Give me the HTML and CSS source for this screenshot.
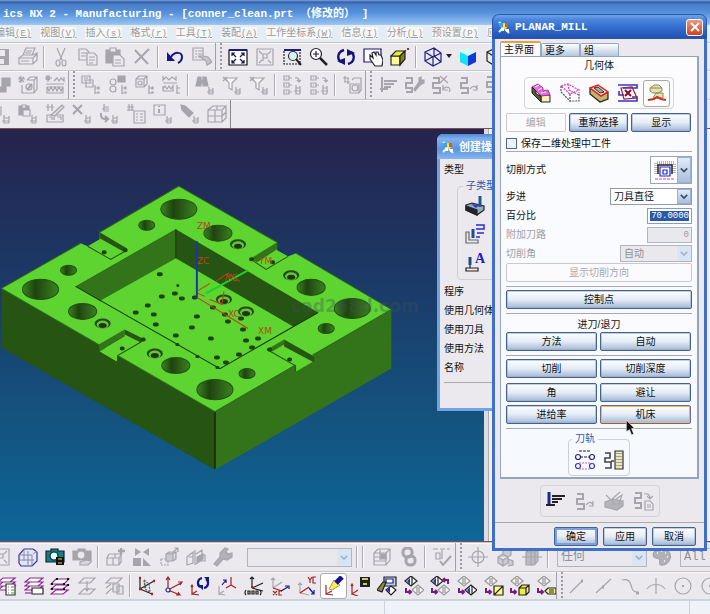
FILE: index.html
```html
<!DOCTYPE html>
<html lang="zh-CN">
<head>
<meta charset="utf-8">
<title>NX 2 - Manufacturing</title>
<link rel="stylesheet" href="styles.css">
</head>
<body>
<svg class="sprite" aria-hidden="true">
  <defs>
    <symbol id="save" viewBox="0 0 20 20"><path fill="currentColor" stroke="none" fill-rule="evenodd" d="M1 2h17v16H3l-2-2zM5 3v6h9V3zM6 12v5h7v-5z"/></symbol>
    <symbol id="print" viewBox="0 0 20 20"><path d="M5 8l3-7h9l-3 7M8 4h6M7 6h6M1 11l4-3h10l4-2v7l-4 4H1zM1 11h14v6M15 11l4-4M3 14h8"/></symbol>
    <symbol id="cut" viewBox="0 0 20 20"><path d="M6 1l5 12M14 1L9 13"/><ellipse cx="7" cy="16" rx="2" ry="3"/><ellipse cx="13" cy="16" rx="2" ry="3"/></symbol>
    <symbol id="copy" viewBox="0 0 20 20"><path d="M1 2h7l3 3v8H1zM3 6h6M3 9h5"/><path fill="#ebe9ee" d="M9 6h7l3 3v9H9zM11 10h6M11 13h6M11 16h4"/></symbol>
    <symbol id="paste" viewBox="0 0 20 20"><path fill="currentColor" d="M1 3h14v13H1z"/><path fill="#ebe9ee" d="M5 1h6v4H5zM8 8h7l4 4v7H8zM10 13h6M10 16h6"/></symbol>
    <symbol id="del" viewBox="0 0 20 20"><path stroke-width="2" d="M3 3l13 14M17 2L3 16"/></symbol>
    <symbol id="undo" viewBox="0 0 20 20"><path stroke="#14148c" stroke-width="2" d="M6 10c4-6 11-5 11 0 0 3-2 5-4 6"/><path fill="#14148c" stroke="none" d="M2 5v9h8z"/></symbol>
    <symbol id="pen" viewBox="0 0 20 20"><path d="M1 1h10v12H1zM3 4h2M6 4h4M3 7h2M6 7h4M3 10h2M6 10h3"/><path fill="#c5c4ca" d="M7 9l7 5 1 4 5-3-4-5-5-1z"/></symbol>
    <symbol id="fit" viewBox="0 0 20 20"><path fill="#fff" stroke="#111" d="M1 3h18v15H1z"/><path stroke="#1a1a80" stroke-width="2" d="M1 3h18"/><path stroke="#141450" d="M4 9V6h3M13 6h3v3M16 13v3h-3M7 16H4v-3M4 6l4 4M16 6l-4 4M4 16l4-4M16 16l-4-4"/></symbol>
    <symbol id="fit2" viewBox="0 0 20 20"><path d="M2 2h16v16H2zM4 4l3 3M16 4l-3 3M4 16l3-3M16 16l-3-3M8 14V7h4v4H8"/></symbol>
    <symbol id="zoombox" viewBox="0 0 20 20"><path stroke="#222" stroke-dasharray="2 1" d="M2 3h16v14H2z"/><path stroke="#1a1a90" stroke-width="2" d="M2 3h17"/><circle cx="11" cy="9" r="4.500" fill="#d8f2ee" stroke="#333"/><path stroke="#222" stroke-width="2" d="M14 12l5 6"/></symbol>
    <symbol id="zoom" viewBox="0 0 20 20"><circle cx="7" cy="7" r="5.500" fill="#fff" stroke="#222"/><path stroke="#14147c" d="M4 7h6M7 4v6"/><path stroke="#222" stroke-width="2.500" d="M11 11l7 7"/></symbol>
    <symbol id="rotate" viewBox="0 0 20 20"><path stroke="#14147c" stroke-width="2.400" d="M8 3C1 5 1 12 5 15M12 17c7-2 7-9 3-12"/><path fill="#14147c" stroke="none" d="M1 14l8-3v7zM19 6l-8 3V2z"/></symbol>
    <symbol id="pan" viewBox="0 0 20 20"><path fill="#fff" stroke="#14147c" d="M1 2h17v13H1z"/><path fill="#fff" stroke="#222" d="M7 8l3 3-1-5 2-1 2 3 0-3 2 0 1 3 2 0 2 5-1 6h-7l-5-7z"/></symbol>
    <symbol id="ybox" viewBox="0 0 20 20"><path fill="#fbfb9c" stroke="#222" d="M1 9h9v9H1z"/><path fill="#eaea30" stroke="#222" d="M1 9l5-5h9l-5 5z"/><path fill="#83831e" stroke="#222" d="M10 18V9l5-5v8z"/><path stroke="#b02030" stroke-width="2" d="M18 1v2"/></symbol>
    <symbol id="wire" viewBox="0 0 20 20"><path stroke="#202080" stroke-width="1.200" d="M2 5l9-4 7 5v9l-8 4-8-5zM2 5l8 5 8-4M10 10v9M11 1v8M2 14l9-5 7 6"/></symbol>
    <symbol id="shade" viewBox="0 0 20 20"><path fill="#cffcff" stroke="none" d="M2 5l8-4 8 4-8 4z"/><path fill="#10e4f2" stroke="none" d="M2 5l8 4v10l-8-4z"/><path fill="#1238d8" stroke="none" d="M10 9l8-4v10l-8 4z"/></symbol>
    <symbol id="wireb" viewBox="0 0 20 20"><path stroke="#222" stroke-width="1.200" d="M2 5l9-4 7 5v9l-8 4-8-5zM2 5l8 5 8-4M10 10v9"/></symbol>
    <symbol id="newblk" viewBox="0 0 20 20"><path d="M2 3l5 5M7 3L2 8M4 1v8M1 5h7"/><path fill="currentColor" d="M11 3h8v8h-4v6H7v-5h4z"/></symbol>
    <symbol id="newgeo" viewBox="0 0 20 20"><path d="M1 2l5 5M6 2L1 7M3 1v7M0 4h7M9 5l3-3h7v12l-3 4H4v-8M9 5h7v13M16 5l3-3"/><circle cx="11" cy="12" r="3"/><path stroke-width="2" d="M9 15l5-6"/></symbol>
    <symbol id="newmth" viewBox="0 0 20 20"><path d="M1 1l4 4M5 1L1 5M3 0v7M0 3h7M9 6l3-3 2 3 2-3 3 3V2M1 9h18M2 12h16v6H2v-6l2 4 2-4 2 4 2-4 2 4 2-4 2 4 2-4"/></symbol>
    <symbol id="tree" viewBox="0 0 20 20"><path d="M1 1h8v7H1zM3 3h4M3 5h4M5 5h7v7H5zM7 8h4"/><path fill="currentColor" d="M14 10v9M14 13h3M14 18h3M17 12h1v2h-1zM17 17h1v1h-1z"/></symbol>
    <symbol id="tree2" viewBox="0 0 20 20"><path fill="currentColor" d="M10 1h7v6h-7zM14 10v9M14 13h3M14 18h3M17 12h1v2h-1zM17 17h1v1h-1z"/><circle cx="5" cy="7" r="3"/><circle cx="5" cy="14" r="3"/></symbol>
    <symbol id="tree3" viewBox="0 0 20 20"><path d="M1 4l3-3h8v8l-3 3H1zM1 4h8v8M9 4l3-3"/><circle cx="5" cy="8" r="2"/><path fill="currentColor" d="M14 10v9M14 13h3M14 18h3M17 12h1v2h-1zM17 17h1v1h-1z"/></symbol>
    <symbol id="tree4" viewBox="0 0 20 20"><path d="M1 1v4l3-3 3 3 3-3 4 3V1M1 8h14M1 11v5h10v-5l-2 3-2-3-2 3-2-3-2 3"/><path fill="currentColor" d="M15 10v9M15 13h3M15 18h3"/></symbol>
    <symbol id="binoc" viewBox="0 0 20 20"><path fill="currentColor" d="M1 11L3 2h3v9zM8 11V2h3l2 9zM5 5h4v3H5z"/><path d="M14 12v7h4M14 15h4M12 17h6M18 13v6"/></symbol>
    <symbol id="filt" viewBox="0 0 20 20"><path fill="#f6f6f8" d="M3 3h12l-5 5v7l-3-2V8z"/><path d="M1 2l4 4M5 2L1 6M14 12v7h4M14 15h4M12 17h6M18 13v6"/></symbol>
    <symbol id="list" viewBox="0 0 20 20"><path d="M2 1h5v4H2zM2 8h5v4H2zM2 15h5v4H2zM4 3h1M4 10h1M4 17h1M7 10h3M7 3h3M7 17h3M13 3c3-1 4 1 4 3M15 5l2 2 2-2M14 10v9h4M14 13h4M12 16h7M18 11v8"/></symbol>
    <symbol id="gen" viewBox="0 0 20 20"><path d="M1 3h6M3 1v6M6 3v6M2 7h6M10 5l2-2h7v12l-2 3H8V9h9v9"/><circle cx="13" cy="13" r="3"/></symbol>
    <symbol id="mill" viewBox="0 0 20 20"><path stroke-width="2" d="M4 2v15M6 6h13M6 9h10M6 12h7M2 14h8"/></symbol>
    <symbol id="snake" viewBox="0 0 20 20"><path stroke-width="2" d="M2 3h6v5H2v5h7v5H2"/><path d="M11 14c3-4 6-3 7 0M18 10v5h-4"/></symbol>
    <symbol id="snakex" viewBox="0 0 20 20"><path stroke-width="2" d="M1 3h6v5H1v5h7v5H1"/><path d="M8 1l8 7M15 1L8 8M17 17c3-4-2-7-6-3M11 10v5h5"/></symbol>
    <symbol id="snakew" viewBox="0 0 20 20"><path stroke-width="2" d="M1 3h6v5H1v5h6v4H1"/><path fill="currentColor" d="M9 14l5-7 0-4 2-1 0 3 3 0 0 3-4 2-5 6z"/></symbol>
    <symbol id="snakep" viewBox="0 0 20 20"><path stroke-width="2" d="M1 2h6v5H1v5h6v5H1"/><path d="M10 3c4-1 6 1 6 4M13 5l3 3 3-3M11 10h5l3 3v6h-8zM13 14h4M13 16h4"/></symbol>
    <symbol id="op" viewBox="0 0 20 20"><path d="M1 3h9v8H1zM3 3V1h5v2M3 5h5M3 8h5M13 11v8h5M13 14h5M11 17h7M18 12v7"/></symbol>
    <symbol id="oppaste" viewBox="0 0 20 20"><path fill="currentColor" d="M1 2h10v9H1z"/><path fill="#ebe9ee" d="M4 1h4v3H4zM5 6h7v6H5z"/><path d="M14 11v8h4M14 14h4M12 17h6M18 12v7"/></symbol>
    <symbol id="opedit" viewBox="0 0 20 20"><path d="M1 3h8M3 0v7M7 0v7M2 11h16v7H2zM4 13h3v3M9 13v3M12 13h4v3"/><path fill="#d8d7dc" d="M6 11L17 1l2 2-9 9z"/></symbol>
    <symbol id="opdel" viewBox="0 0 20 20"><path stroke-width="2" d="M1 1l9 9M10 1L1 10"/><path d="M14 11v8h4M14 14h4M12 17h6M18 12v7"/></symbol>
    <symbol id="opcyc" viewBox="0 0 20 20"><path d="M5 0v7h5M5 3h5M3 5h7"/><path stroke-width="2" d="M2 9c0 7 2 6 7 6M6 12l3 3-3 3"/><path d="M14 11v8h4M14 14h4M12 17h6M18 12v7"/></symbol>
    <symbol id="opprop" viewBox="0 0 20 20"><path d="M1 3h7M3 0v7M6 0v7M1 6h7M8 7h11v12H8zM10 10h2M14 10h3M10 13h2M14 13h3M10 16h2M14 16h3"/></symbol>
    <symbol id="opinfo" viewBox="0 0 20 20"><path d="M1 1h11v10H1z"/><path stroke-width="2" d="M6 5v4M6 2v1"/><path d="M14 12v7h4M14 15h4M12 17h6M18 13v6"/></symbol>
    <symbol id="opflash" viewBox="0 0 20 20"><path fill="currentColor" d="M1 1l4 1 8 7-4 4L2 6z"/><path d="M14 12v7h4M14 15h4M12 17h6M18 13v6"/></symbol>
    <symbol id="cage" viewBox="0 0 20 20"><path d="M1 6l5-4h13v12l-4 4H1zM1 6h14v12M15 6l4-4M8 6v12M1 12h14M10 2v4M19 8l-4 4"/></symbol>
    <symbol id="part" viewBox="0 0 20 20"><path fill="#e4e6f4" stroke="#3434a0" d="M1 8l5-6h9l4 3v9l-5 5H3l-2-3z"/><path stroke="#88a" stroke-width="1" d="M6 2v12M1 8h13M14 8v10M2 13h14M10 4v14M15 7l4-3"/></symbol>
    <symbol id="cam" viewBox="0 0 20 20"><path fill="#138080" stroke="#123" d="M1 4h5V2h7v2h6v11H1z"/><circle cx="9" cy="9" r="4" fill="#dff" stroke="#123"/><path fill="#111" stroke="none" d="M11 10h8v8h-8z"/><path stroke="#dd4" d="M13 12h4M13 16h4"/></symbol>
    <symbol id="camg" viewBox="0 0 20 20"><path fill="currentColor" d="M1 4h5V2h7v2h6v9H1z"/><circle cx="9" cy="8" r="4" fill="#ebe9ee"/><path fill="#d6d5da" d="M8 15l6-2 6 1-4 4H8z"/></symbol>
    <symbol id="blkadd" viewBox="0 0 20 20"><path d="M2 11h6v7H2zM8 11h6v7H8zM4 7h6v4M2 11l2-4M14 11l2-3v7l-2 3M10 7h6"/><path stroke-width="2.500" d="M16 1v7M13 4h7"/></symbol>
    <symbol id="mirror" viewBox="0 0 20 20"><path fill="currentColor" stroke="none" d="M1 11h8v8H1zM11 19v-8l8 8zM3 1l6 4-6 4zM17 1l-6 4 6 4z"/></symbol>
    <symbol id="cubes" viewBox="0 0 20 20"><path d="M2 12h7v6H2z" stroke-dasharray="2 1"/><path fill="#c9c8ce" d="M7 7h7v7H7zM7 7l3-2h7l-3 2M14 14l3-2V5"/><path d="M14 5l5-4M19 1v4M19 1h-4"/></symbol>
    <symbol id="iso" viewBox="0 0 20 20"><path d="M1 10l6-5v11l-6 2zM9 3v15M10 7l6-4v10l-6 4M16 8h3v6h-5M3 10h4"/><path fill="currentColor" d="M11 10l6-3v5l-6 3z"/></symbol>
    <symbol id="wrench" viewBox="0 0 20 20"><path fill="#b2b1b8" d="M1 17l6-7 0-4 5-5 3 1-2 3 2 2 4-1 0 4-5 3-4-1-6 7z"/></symbol>
    <symbol id="hbox" viewBox="0 0 20 20"><path d="M2 6l4-4h12v11l-4 5H2zM2 6h12v12M14 6l4-4M2 10h12M2 14h12M8 2v11"/><path fill="currentColor" d="M9 7h5v5H9z"/></symbol>
    <symbol id="chain" viewBox="0 0 20 20"><rect x="4" y="1" width="9" height="9" rx="4" stroke-width="3"/><rect x="7" y="9" width="9" height="9" rx="4" stroke-width="3"/></symbol>
    <symbol id="check" viewBox="0 0 20 20"><path d="M1 2h5M8 2h5M15 2h3M4 6h4v6H4zM10 3v9"/><path stroke-width="2" d="M8 14l3 4 8-9"/></symbol>
    <symbol id="target" viewBox="0 0 20 20"><circle cx="10" cy="10" r="6"/><path d="M10 0v20M0 10h20"/></symbol>
    <symbol id="stack" viewBox="0 0 20 20"><path fill="#cccbd1" d="M3 10l5-3 5 3v6l-5 3-5-3zM3 10l5 3 5-3M8 13v6M8 7V3l4-2 4 2v5l-3 2M13 12l5 2v4l-5 1"/></symbol>
    <symbol id="sphere" viewBox="0 0 20 20"><path fill="#bdbcc2" d="M4 5l4-3h8v12l-4 4H4zM4 5h9v13M13 5l3-3M0 10h20M9 1v18"/></symbol>
    <symbol id="palette" viewBox="0 0 20 20"><path fill="#b2b1b8" d="M3 5c5-5 14-4 16 2s-4 12-9 11c-3-1 0-5-2-6S0 11 3 5z"/><path stroke="#eee" stroke-width="2" d="M6 6h1M10 4h1M14 6h1M16 10h1M13 14h1"/></symbol>
    <symbol id="lay1" viewBox="0 0 20 20"><path fill="#fff" stroke="#8a2a90" d="M1 14l5-4h12l-5 4zM1 10l5-4h12l-5 4zM1 6l5-4h12l-5 4z"/><path fill="#fff" stroke="#333" d="M9 8h9v11H9z"/><path stroke="#686" d="M11 11h1M14 11h3M11 14h1M14 14h3M11 17h1M14 17h3"/></symbol>
    <symbol id="lay2" viewBox="0 0 20 20"><path fill="#fff" stroke="#8a2a90" d="M1 14l5-4h13l-5 4zM1 10l5-4h13l-5 4zM1 6l5-4h13l-5 4z"/><path stroke="#8a2a90" d="M1 17h6"/><path fill="#fff" stroke="#222" d="M8 12h11v6H8z"/></symbol>
    <symbol id="lay3" viewBox="0 0 20 20"><path fill="#fff" stroke="#8a2a90" d="M1 18l5-4h12l-5 4zM1 13l5-4h12l-5 4zM1 8l5-5h13l-5 5z"/><path stroke="#111" stroke-width="2" d="M6 3h2M17 3h2M1 8h2M13 8h2M17 9h2M1 13h2M13 13h2"/></symbol>
    <symbol id="lay4" viewBox="0 0 20 20"><path d="M2 7l5-5h11l-5 5zM2 18l5-5h11l-5 5zM10 5v9M8 12l2 3 2-3"/></symbol>
    <symbol id="lay5" viewBox="0 0 20 20"><path d="M2 7l5-5h11l-5 5zM2 12l5-4M2 18l5-5h4"/><path fill="#e4e3e8" d="M9 8h6v8H9zM13 10h6v8h-6z"/></symbol>
    <symbol id="axa" viewBox="0 0 20 20"><path stroke="#222" d="M3 2v11M3 13l14-8M3 13l12 5"/><path stroke="#a22" stroke-width="2.500" d="M2 2h2M16 5h2M14 18h2M2 13h2"/><path stroke="#555" stroke-dasharray="2 1" d="M7 4l5 4 1 8-5-3zM7 4l2 9"/></symbol>
    <symbol id="axb" viewBox="0 0 20 20"><path stroke="#a02028" d="M4 14V2M2 4l2-3 2 3M4 14l13-7M14 6h4l-2 3M4 14l12 5M14 16l2 3-4 0"/><circle cx="4" cy="14" r="2" fill="#fff" stroke="#22a"/></symbol>
    <symbol id="axc" viewBox="0 0 20 20"><path stroke="#a02028" d="M2 9v9l5-3M2 18l7 1M1 11l1-2 1 2"/><path stroke="#14148c" stroke-width="2.200" d="M12 2c-5 1-5 7-2 9M14 12c5-1 5-7 2-9"/><path fill="#14148c" stroke="none" d="M7 9h6v5zM14 1h5v5z"/></symbol>
    <symbol id="axd" viewBox="0 0 20 20"><path d="M2 10v8l5-3M2 18l6 1"/><path stroke="#a02028" d="M14 9V1M14 9l5 3M14 9l-5 3"/><path stroke="#14148c" d="M5 9l4-5M6 4h3v3"/></symbol>
    <symbol id="axe" viewBox="0 0 20 20"><path stroke="#222" d="M8 12V1M6 3l2-2 2 2M8 12l11-5M8 12l11 3"/><path stroke="#a22" stroke-width="2" d="M7 11h2"/><path stroke="#222" d="M2 14q-2 3 0 5M4 15h2v3H4zM8 15h2v3H8zM12 15h2v3h-2zM16 14q2 3 0 5"/></symbol>
    <symbol id="axf" viewBox="0 0 20 20"><path d="M3 12V2M1 4l2-2 2 2M3 12l9-6"/><path stroke="#a22" d="M3 12l9 3M3 15l4 4M7 15l-4 4M12 15H9v4h3"/><path stroke="#14148c" d="M11 15l7-4M15 10h4v3"/></symbol>
    <symbol id="axg" viewBox="0 0 20 20"><path d="M3 7v10M1 9l2-2 2 2M3 17l9 2"/><path stroke="#a22" d="M3 17l9-6M11 1l2 3 2-3M13 4v3M19 1h-3v6h3"/><path stroke="#14148c" d="M12 12l5 6M17 14v4h-3"/></symbol>
    <symbol id="torch" viewBox="0 0 20 20"><path fill="#ffef50" stroke="#998" stroke-width="1" d="M5 13l5-9 6 5-8 5z"/><path stroke="#14148c" stroke-width="5" d="M12 7l6-6"/><path stroke="#a22" d="M2 9v9l6-3M2 18l7 1"/></symbol>
    <symbol id="axsave" viewBox="0 0 20 20"><path stroke="#a22" d="M2 8v10l6-4M2 18l6 2M1 10l1-2 1 2"/><path fill="#222" stroke="none" d="M10 1h10v10H10z"/><path stroke="#cc6" stroke-width="2" d="M12 3h6M13 8h4"/></symbol>
    <symbol id="dsp" viewBox="0 0 20 20"><path fill="#bcd" stroke="#222" d="M7 1h12v9H7z"/><path fill="#fff" stroke="#22a" d="M9 3h7v4H9z"/><path fill="#8a8a40" stroke="#222" d="M0 14l6-8 3 0-4 10z"/><path fill="#fff" stroke="#222" d="M9 14l5-4 5 4-5 5z"/><path fill="#22c" stroke="none" d="M13 11v6l-3-3z"/></symbol>
    <symbol id="da" viewBox="0 0 20 20"><path fill="#fff" stroke="#222" d="M1 5l6-5 6 5-6 5z"/><path fill="#23d" stroke="none" d="M6 2v7L3 5z"/><path stroke="#222" d="M8 1v8"/><path fill="#f4f4f6" stroke="#999" d="M8 14l6-5 6 5-6 5zM13 11v6M15 11v6"/><path stroke="#7a1a80" stroke-width="2" d="M2 12v4h4M5 14l2 2-2 2"/></symbol>
    <symbol id="da2" viewBox="0 0 20 20"><path fill="#fff" stroke="#222" d="M1 5l6-5 6 5-6 5z"/><path fill="#23d" stroke="none" d="M6 2v7L3 5z"/><path stroke="#222" d="M8 1v8"/><path fill="#f4f4f6" stroke="#999" d="M8 14l6-5 6 5-6 5zM13 11v6M15 11v6"/><path stroke="#7a1a80" stroke-width="2" d="M2 12v4h4M5 14l2 2-2 2M18 8V4h-4M15 2l-2 2 2 2"/></symbol>
    <symbol id="db" viewBox="0 0 20 20"><path fill="#f4f4f6" stroke="#999" d="M1 5l6-5 6 5-6 5zM6 2v6M8 2v6"/><path fill="#fff" stroke="#222" d="M8 14l6-5 6 5-6 5z"/><path fill="#23d" stroke="none" d="M13 11v7l-3-4z"/><path stroke="#222" d="M15 10v8"/><path stroke="#7a1a80" stroke-width="2" d="M2 12v4h4M5 14l2 2-2 2"/></symbol>
    <symbol id="dc" viewBox="0 0 20 20"><path fill="#f4f4f6" stroke="#999" d="M1 5l6-5 6 5-6 5zM6 2v6M8 2v6"/><path fill="#ffff78" stroke="#222" d="M10 10h9v9h-9zM10 19l9-9"/><path stroke="#7a1a80" stroke-width="2" d="M2 12v4h4M5 14l2 2-2 2"/></symbol>
    <symbol id="dd" viewBox="0 0 20 20"><path fill="#f4f4f6" stroke="#999" d="M1 5l6-5 6 5-6 5zM6 2v6M8 2v6"/><path fill="#f2ee40" stroke="#222" d="M9 12h7v7H9zM9 12l3-3h7l-3 3M16 19l3-3V9"/><path stroke="#7a1a80" stroke-width="2" d="M1 12v4h4M4 14l2 2-2 2"/></symbol>
    <symbol id="de" viewBox="0 0 20 20"><path fill="#f4f4f6" stroke="#999" d="M1 5l6-5 6 5-6 5zM6 2v6M8 2v6"/><path fill="#f8f48a" stroke="#222" d="M8 15l3-3h8v6h-8zM12 14h5M12 16h5"/><path stroke="#7a1a80" stroke-width="2" d="M1 12v4h4M4 14l2 2-2 2"/></symbol>
    <symbol id="ln1" viewBox="0 0 20 20"><path d="M4 17L16 5"/><path stroke-width="3" d="M15 5h2"/></symbol>
    <symbol id="ln2" viewBox="0 0 20 20"><path d="M3 17L18 3"/><path stroke-width="3" d="M9 11h2"/></symbol>
    <symbol id="cv" viewBox="0 0 20 20"><path d="M2 4c5-1 8 1 9 5s2 7 6 7"/><path stroke-width="3" d="M16 17h3"/></symbol>
    <symbol id="crs" viewBox="0 0 20 20"><path d="M10 2v16M1 13c4-6 14-6 18 0"/></symbol>
    <symbol id="circ" viewBox="0 0 20 20"><circle cx="10" cy="10" r="8"/><path stroke-width="2" d="M9 10h2"/></symbol>
    <symbol id="chev" viewBox="0 0 10 10"><path stroke-width="2" d="M1 3l4 4 4-4"/></symbol>
    <symbol id="logo" viewBox="0 0 14 14"><path stroke="#e8f4ff" stroke-width="2" d="M2 2l3 3M2 12l4-4M8 9l4 4"/><circle cx="7" cy="6" r="3" fill="#f6e64a" stroke="none"/><path fill="#e35326" stroke="none" d="M8 3h3v4H8z"/><path fill="#38a4e8" stroke="none" d="M2 3h4v4H2z"/><path fill="#fff" stroke="none" d="M4 8h3v3H4zM9 9h3v3H9z"/></symbol>
    <symbol id="g1" viewBox="0 0 20 20"><path fill="#f6f0b4" stroke="#222" stroke-width="1" d="M10 12h9v7h-9z"/><path fill="#e86ae0" stroke="#a030a0" stroke-width="1" d="M1 4l6-3 5 4v3l5-1 2 5-9 1z"/><path stroke="#fff" stroke-width="1" d="M4 4l4-2M7 7l4-2M10 10l5-1"/><path fill="#5a5a2a" stroke="#222" stroke-width="1" d="M1 4l4 4v3l5 2v6l-9-9z"/></symbol>
    <symbol id="g2" viewBox="0 0 20 20"><path stroke="#d63ed0" stroke-dasharray="2 1" d="M1 3l7-2 11 6-9 4zM8 1l1 6 10 5"/><path stroke="#555" stroke-dasharray="2 1" d="M1 3v6l9 9h9v-9M10 11v8"/></symbol>
    <symbol id="g3" viewBox="0 0 20 20"><path fill="#c8b070" stroke="#222" d="M1 6v5l10 8 8-3v-6z"/><path fill="#f4e2d8" stroke="#dd2418" stroke-width="1.500" d="M1 5l8-3 10 7-7 4z"/><path fill="#aaa" stroke="#333" stroke-width="1" d="M5 5l4-1 6 5-4 1z"/></symbol>
    <symbol id="g4" viewBox="0 0 20 20"><path stroke="#3434c8" stroke-width="1.600" d="M0 2h19v3H5M1 8v4h5M0 18h19v-4h-5"/><path stroke="#9c2048" d="M3 5l11-1 5 11-13 1z"/><path stroke="#801028" stroke-width="2" d="M7 7l6 6M13 7l-6 6"/></symbol>
    <symbol id="g5" viewBox="0 0 20 20"><path fill="#e4e0b0" stroke="#8a8a60" stroke-width="1" d="M3 5l4-3h5l3 3v3l-4 2H6L3 8zM3 5h8l4 0M9 10h7v5H6z"/><path stroke="#d03020" stroke-width="2" d="M1 17l6-1 3-2 4 2 5 1"/></symbol>
    <symbol id="ptn" viewBox="0 0 22 20"><path stroke="#b4b4a8" stroke-width="4" stroke-dasharray="1 1" d="M2 14V3h18v11"/><path stroke="#222" stroke-width="1.500" d="M4 14V5h14v9"/><path fill="#fff" stroke="#2222dc" stroke-width="1.200" d="M6 7h10v9H6zM9 10h4v4H9z"/><path stroke="#d040c0" stroke-dasharray="3 1" d="M1 19h20"/></symbol>
    <symbol id="p1" viewBox="0 0 20 20"><path stroke="#222" stroke-dasharray="3 1" d="M4 1h12M5 7h10"/><circle cx="3" cy="7" r="2.500" stroke="#228"/><circle cx="17" cy="7" r="2.500" stroke="#228"/><circle cx="3" cy="16" r="2.500" stroke="#33a"/><circle cx="17" cy="16" r="2.500" stroke="#33a"/><path stroke="#d060d0" stroke-dasharray="2 1" d="M4 13h12M4 19h12"/></symbol>
    <symbol id="p2" viewBox="0 0 20 20"><path stroke="#444" stroke-width="1.600" d="M1 3h5v5H1v4h6v6H1M7 11h3"/><path fill="#e6e6c0" stroke="#333" d="M11 1h8v18h-8z"/><path stroke="#776" stroke-dasharray="1 2" d="M13 3v14M17 3v14M15 3v14"/></symbol>
    <symbol id="q1" viewBox="0 0 20 20"><path stroke="#1a2a90" stroke-width="3" d="M4 1v12"/><path stroke="#222" stroke-width="2" d="M7 5h13M7 8h10M7 11h6M1 14h9"/></symbol>
    <symbol id="q3" viewBox="0 0 20 20"><path fill="#b5b4ba" d="M1 11l8-3 10 2v5l-6 4-12-3z"/><path d="M2 4l5 5 9-8M9 8v5h6l3-9-6 4"/></symbol>
    <symbol id="s1" viewBox="0 0 20 20"><path fill="#9ab" stroke="#222" d="M1 9l6-2 12 3v4l-7 5L1 14z"/><path fill="#223" stroke="#222" d="M1 10l11 4v5L1 14z"/><path fill="#2a3ad0" stroke="none" d="M6 8l8 1-3 3z"/><path stroke="#1c5a8c" stroke-width="3" d="M15 0v11"/></symbol>
    <symbol id="s2" viewBox="0 0 20 20"><path stroke="#666" d="M1 8v11h12v-3H4V8z"/><path stroke="#234a90" stroke-width="3" d="M8 5v9"/><path stroke="#2a2ad8" stroke-width="1.500" d="M11 1h8v4h-8M12 9h7M11 13h4"/></symbol>
    <symbol id="s3" viewBox="0 0 20 20"><path stroke="#224a7c" stroke-width="3" d="M5 5v8"/><path stroke="#222" d="M5 13v3M1 16h12v3H1z"/></symbol>
  </defs>
</svg>

<div class="app">
  <header class="titlebar">ics NX 2 - Manufacturing - [conner_clean.prt （修改的） ]</header>
  <nav class="menubar">
    <a href="#">编辑<i>(E)</i></a><a href="#">视图<i>(V)</i></a><a href="#">插入<i>(s)</i></a><a href="#">格式<i>(r)</i></a><a href="#">工具<i>(T)</i></a><a href="#">装配<i>(A)</i></a><a href="#">工作坐标系<i>(W)</i></a><a href="#">信息<i>(I)</i></a><a href="#">分析<i>(L)</i></a><a href="#">预设置<i>(P)</i></a><a href="#">应用</a>
  </nav>

  <div class="toolbar lead">
    <button aria-label="save"><svg><use href="#save"/></svg></button>
    <button aria-label="print"><svg><use href="#print"/></svg></button>
    <hr>
    <button aria-label="cut"><svg><use href="#cut"/></svg></button>
    <button aria-label="copy"><svg><use href="#copy"/></svg></button>
    <button aria-label="paste"><svg><use href="#paste"/></svg></button>
    <button aria-label="delete"><svg><use href="#del"/></svg></button>
    <hr>
    <button aria-label="undo"><svg><use href="#undo"/></svg></button>
    <button aria-label="properties"><svg><use href="#pen"/></svg></button>
    <span class="grip"></span>
    <button aria-label="fit"><svg><use href="#fit"/></svg></button>
    <button aria-label="fit selection"><svg><use href="#fit2"/></svg></button>
    <button aria-label="zoom box"><svg><use href="#zoombox"/></svg></button>
    <button aria-label="zoom"><svg><use href="#zoom"/></svg></button>
    <button aria-label="rotate"><svg><use href="#rotate"/></svg></button>
    <button aria-label="pan"><svg><use href="#pan"/></svg></button>
    <button aria-label="perspective"><svg><use href="#ybox"/></svg></button>
    <hr>
    <button aria-label="wireframe"><svg><use href="#wire"/></svg></button>
    <span class="drop"></span>
    <button aria-label="shaded"><svg><use href="#shade"/></svg></button>
    <button aria-label="hidden edges"><svg><use href="#wireb"/></svg></button>
  </div>
  <div class="toolbar lead">
    <button aria-label="tool"><svg><use href="#newblk"/></svg></button>
    <button aria-label="geometry"><svg><use href="#newgeo"/></svg></button>
    <button aria-label="method"><svg><use href="#newmth"/></svg></button>
    <span class="grip"></span>
    <button aria-label="program view"><svg><use href="#tree"/></svg></button>
    <button aria-label="tool view"><svg><use href="#tree2"/></svg></button>
    <button aria-label="geometry view"><svg><use href="#tree3"/></svg></button>
    <button aria-label="method view"><svg><use href="#tree4"/></svg></button>
    <hr>
    <button aria-label="find"><svg><use href="#binoc"/></svg></button>
    <button aria-label="filter"><svg><use href="#filt"/></svg></button>
    <button aria-label="filter all"><svg><use href="#filt"/></svg></button>
    <hr>
    <button aria-label="expand"><svg><use href="#list"/></svg></button>
    <button aria-label="collapse"><svg><use href="#list"/></svg></button>
    <hr>
    <button aria-label="object"><svg><use href="#gen"/></svg></button>
    <span class="grip"></span>
    <button aria-label="generate"><svg><use href="#mill"/></svg></button>
    <button aria-label="edit path"><svg><use href="#snakew"/></svg></button>
    <button aria-label="delete path"><svg><use href="#snakex"/></svg></button>
    <button aria-label="replay path"><svg><use href="#snake"/></svg></button>
    <button aria-label="list path"><svg><use href="#snakep"/></svg></button>
  </div>
  <div class="toolbar lead">
    <button aria-label="copy operation"><svg><use href="#op"/></svg></button>
    <button aria-label="paste operation"><svg><use href="#oppaste"/></svg></button>
    <button aria-label="edit operation"><svg><use href="#opedit"/></svg></button>
    <button aria-label="delete operation"><svg><use href="#opdel"/></svg></button>
    <button aria-label="transform"><svg><use href="#opcyc"/></svg></button>
    <button aria-label="operation properties"><svg><use href="#opprop"/></svg></button>
    <button aria-label="information"><svg><use href="#opinfo"/></svg></button>
    <button aria-label="highlight"><svg><use href="#opflash"/></svg></button>
    <button aria-label="boundary"><svg><use href="#cage"/></svg></button>
    <span class="end"></span>
  </div>

  <main class="work">
    <svg class="scene" viewBox="0 130 484 411" preserveAspectRatio="xMidYMid slice" role="img" aria-label="part">
      <defs>
        <linearGradient id="bore"><stop offset="0" stop-color="#3c8422"/><stop offset=".35" stop-color="#1f4310"/><stop offset="1" stop-color="#3b8220"/></linearGradient>
        <g id="cb"><ellipse rx="8" ry="5" fill="#234a12"/><ellipse cy="1" rx="6" ry="4" fill="#6bbf45"/><ellipse cy="2" rx="4" ry="2.500" fill="#1c380e"/></g>
      </defs>
      <path fill="#265412" d="M2 289l213 123v58L2 348z"/>
      <path fill="#33741b" d="M215 412l176-102v59l-176 101z"/>
      <path stroke="#1a330e" stroke-width="2" d="M215 412v57"/>
      <path fill="#5dd42f" d="M179 187L100 233v7l-12 7-7-3L2 289l213 123 176-102-95-56-8 3-11-6v-8z"/>
      <g stroke="#2d6a18" fill="none" stroke-width="1">
        <path d="M2 289L81 244M100 233l79-46 98 56M296 254l95 56-176 102L2 289"/>
      </g>
      <path fill="#265412" d="M100 233l27 16-2 4-25-14z"/>
      <path fill="none" stroke="#265412" stroke-width="1" d="M88 247l23 13 16-9"/>
      <path fill="#33741b" d="M277 243v7l-20 13-6-4z"/>
      <path fill="none" stroke="#265412" stroke-width="1" d="M251 260l15 10 22-13"/>
      <path fill="#265412" d="M76 287l100-57 142 83-98 56z"/>
      <path fill="#33741b" d="M76 287l100-57v29l-75 43z"/>
      <path fill="#5dd42f" d="M101 301l75-42 117 68-73 42z"/>
      <path stroke="#1b380e" stroke-width="1" fill="none" d="M76 287l144 82 98-56M176 230v29"/>
      <path fill="#33741b" d="M99 345l26-15v7l-25 15z"/><path fill="#265412" d="M125 330l20 10-4 3-16-8z"/>
      <path fill="#5dd42f" d="M100 352l25-15 16 6-23 14-1 5zM271 348l13-9 29 17v6l-17 10v-6z"/>
      <path fill="none" stroke="#265412" stroke-width="1" d="M118 361v-5l24-14M267 350l28 16v6"/>
      <path fill="#33741b" d="M267 350l17-10v5l-12 7z"/><path fill="#265412" d="M284 340l30 17v6l-30-16z"/>
      <g fill="url(#bore)" stroke="#235010" stroke-width="1">
        <ellipse cx="179" cy="210" rx="18" ry="10"/><ellipse cx="41" cy="290" rx="18" ry="10"/><ellipse cx="352" cy="309" rx="18" ry="10"/><ellipse cx="215" cy="390" rx="18" ry="10"/>
        <ellipse cx="83" cy="312" rx="14" ry="8"/><ellipse cx="218" cy="234" rx="14" ry="8"/><ellipse cx="176" cy="366" rx="14" ry="8"/><ellipse cx="311" cy="288" rx="14" ry="8"/>
        <ellipse cx="147" cy="226" rx="8" ry="5"/><ellipse cx="69" cy="271" rx="8" ry="5"/><ellipse cx="247" cy="374" rx="8" ry="5"/><ellipse cx="326" cy="329" rx="8" ry="5"/>
      </g>
      <use href="#cb" x="103" y="324"/><use href="#cb" x="155" y="354"/><use href="#cb" x="238" y="245"/><use href="#cb" x="291" y="276"/><use href="#cb" x="224" y="300"/><use href="#cb" x="246" y="312"/>
      <g stroke="#1f420f" stroke-width="4" stroke-linecap="round">
        <path d="M159 275h2M174 294h2M161 297h2M181 299h2M194 298h2M147 306h2M135 313h2M153 315h2M155 325h2M196 317h2M191 328h2M175 336h2M210 339h2M212 308h2M216 358h2M224 315h2M227 322h2M240 319h2M242 330h2M245 341h2M257 339h2M251 348h2M238 355h2M225 363h2M104 253h1M122 349h1M125 251h1M143 340h1M272 263h1M251 260h1M289 360h1M269 350h1"/>
        <path stroke-width="3" d="M177 345h1M197 357h1M178 286h0M217 368h1"/>
      </g>
      <path stroke="#1c34b4" stroke-width="2" d="M197 242v56"/>
      <path stroke="#1fd02a" stroke-width="2" d="M206 294l42-23"/>
      <path stroke="#c43c1c" stroke-width="1" fill="none" d="M197 298l51 31M197 292l13-8M198 294l7 3M216 282l12-8-3 9M228 274l12 8M210 300l12 5 2-13"/>
      <g class="axis"><text x="197" y="230">ZM</text><text x="197" y="265">ZC</text><text x="259" y="265">YM</text><text x="226" y="282">YC</text><text x="228" y="318">XC</text><text x="258" y="335">XM</text></g>
      <text class="mark" x="291" y="313">cad268d.com</text>
    </svg>
    <div class="side"></div>
  </main>

  <div class="toolbar lead gap">
    <button aria-label="snap"><svg><use href="#fit2"/></svg></button>
    <button aria-label="part"><svg><use href="#part"/></svg></button>
    <button aria-label="save view"><svg><use href="#cam"/></svg></button>
    <button aria-label="restore view"><svg><use href="#camg"/></svg></button>
    <hr>
    <button aria-label="add component"><svg><use href="#blkadd"/></svg></button>
    <button aria-label="mirror"><svg><use href="#mirror"/></svg></button>
    <button aria-label="move"><svg><use href="#cubes"/></svg></button>
    <button aria-label="mate"><svg><use href="#iso"/></svg></button>
    <button aria-label="tools"><svg><use href="#wrench"/></svg></button>
    <label class="combo off wide"><select aria-label="filter" disabled><option></option></select><svg class="arrow"><use href="#chev"/></svg></label>
    <hr><hr>
    <button aria-label="box"><svg><use href="#hbox"/></svg></button>
    <button aria-label="link"><svg><use href="#chain"/></svg></button>
    <hr>
    <button aria-label="check"><svg><use href="#check"/></svg></button>
    <span class="grip"></span>
    <button aria-label="origin"><svg><use href="#target"/></svg></button>
    <button aria-label="assembly"><svg><use href="#stack"/></svg></button>
    <button aria-label="solid"><svg><use href="#sphere"/></svg></button>
    <hr>
    <label class="combo off any"><select aria-label="type" disabled><option>任何</option></select><svg class="arrow"><use href="#chev"/></svg></label>
    <button aria-label="colour"><svg><use href="#palette"/></svg></button>
    <label class="combo off any"><select aria-label="layer" disabled><option>All</option></select></label>
  </div>
  <div class="toolbar lead low">
    <button aria-label="layer settings"><svg><use href="#lay1"/></svg></button>
    <button aria-label="layer view"><svg><use href="#lay2"/></svg></button>
    <button aria-label="layer category"><svg><use href="#lay3"/></svg></button>
    <button aria-label="move to layer"><svg><use href="#lay4"/></svg></button>
    <button aria-label="copy to layer"><svg><use href="#lay5"/></svg></button>
    <hr>
    <button aria-label="WCS dynamics"><svg><use href="#axa"/></svg></button>
    <button aria-label="WCS origin"><svg><use href="#axb"/></svg></button>
    <button aria-label="rotate WCS"><svg><use href="#axc"/></svg></button>
    <button aria-label="orient WCS"><svg><use href="#axd"/></svg></button>
    <button aria-label="absolute WCS"><svg><use href="#axe"/></svg></button>
    <button aria-label="XC direction"><svg><use href="#axf"/></svg></button>
    <button aria-label="YC direction"><svg><use href="#axg"/></svg></button>
    <button class="on" aria-label="display WCS"><svg><use href="#torch"/></svg></button>
    <button aria-label="save WCS"><svg><use href="#axsave"/></svg></button>
    <button aria-label="object display"><svg><use href="#dsp"/></svg></button>
    <button aria-label="blank"><svg><use href="#da"/></svg></button>
    <button aria-label="reverse blank"><svg><use href="#da2"/></svg></button>
    <button aria-label="unblank"><svg><use href="#db"/></svg></button>
    <button aria-label="unblank face"><svg><use href="#dc"/></svg></button>
    <button aria-label="unblank body"><svg><use href="#dd"/></svg></button>
    <button aria-label="unblank name"><svg><use href="#de"/></svg></button>
    <span class="grip"></span>
    <button aria-label="end point"><svg><use href="#ln1"/></svg></button>
    <button aria-label="mid point"><svg><use href="#ln2"/></svg></button>
    <button aria-label="control point"><svg><use href="#cv"/></svg></button>
    <button aria-label="intersection"><svg><use href="#crs"/></svg></button>
    <button aria-label="arc center"><svg><use href="#circ"/></svg></button>
    <button aria-label="quadrant"><svg><use href="#circ"/></svg></button>
  </div>
  <footer class="status"><span></span><span></span><span></span></footer>
</div>

<section class="win create">
  <h2><svg><use href="#logo"/></svg>创建操作</h2>
  <div class="form">
    <p>类型</p>
    <fieldset>
      <legend>子类型</legend>
      <svg><use href="#s1"/></svg>
      <svg><use href="#s2"/></svg>
      <span class="engrave"><svg><use href="#s3"/></svg><b>A</b></span>
    </fieldset>
    <p>程序</p><p>使用几何体</p><p>使用刀具</p><p>使用方法</p><p>名称</p>
    <hr>
  </div>
</section>

<section class="win mill">
  <h2><svg><use href="#logo"/></svg>PLANAR_MILL<button class="close" aria-label="close"><svg viewBox="0 0 14 14"><path d="M3 3l8 8M11 3l-8 8"/></svg></button></h2>
  <div class="tabs"><button class="cur">主界面</button><button>更多</button><button>组</button></div>
  <div class="page">
    <h3>几何体</h3>
    <div class="icons five">
      <button aria-label="part boundary"><svg><use href="#g1"/></svg></button>
      <button aria-label="blank boundary"><svg><use href="#g2"/></svg></button>
      <button aria-label="check boundary"><svg><use href="#g3"/></svg></button>
      <button aria-label="trim boundary"><svg><use href="#g4"/></svg></button>
      <button class="on" aria-label="floor"><svg><use href="#g5"/></svg></button>
    </div>
    <div class="row three"><button class="btn" disabled>编辑</button><button class="btn">重新选择</button><button class="btn">显示</button></div>
    <label class="tick"><input type="checkbox">保存二维处理中工件</label>
    <hr>
    <div class="field tall"><span>切削方式</span><button class="pattern" aria-label="切削方式"><svg class="pic"><use href="#ptn"/></svg><svg class="arrow"><use href="#chev"/></svg></button></div>
    <div class="field"><label for="step">步进</label><span class="combo step"><select id="step"><option>刀具直径</option></select><svg class="arrow"><use href="#chev"/></svg></span></div>
    <div class="field"><label for="pct">百分比</label><span class="num"><input id="pct" class="sel" value="70.0000"></span></div>
    <div class="field dim"><label for="extra">附加刀路</label><span class="num"><input id="extra" value="0" disabled></span></div>
    <div class="field dim"><label for="ang">切削角</label><span class="combo off angle"><select id="ang" disabled><option>自动</option></select><svg class="arrow"><use href="#chev"/></svg></span></div>
    <button class="btn full" disabled>显示切削方向</button>
    <hr>
    <button class="btn full">控制点</button>
    <hr>
    <h3>进刀/退刀</h3>
    <div class="row"><button class="btn">方法</button><button class="btn">自动</button></div>
    <hr>
    <div class="row pair"><button class="btn">切削</button><button class="btn">切削深度</button></div>
    <div class="row"><button class="btn">角</button><button class="btn">避让</button></div>
    <div class="row"><button class="btn">进给率</button><button class="btn hot">机床</button></div>
    <hr>
    <fieldset class="path">
      <legend>刀轨</legend>
      <button aria-label="display options"><svg><use href="#p1"/></svg></button>
      <button aria-label="machine control"><svg><use href="#p2"/></svg></button>
    </fieldset>
  </div>
  <div class="icons four">
    <button aria-label="generate"><svg><use href="#q1"/></svg></button>
    <button aria-label="replay" disabled><svg><use href="#snake"/></svg></button>
    <button aria-label="verify" disabled><svg><use href="#q3"/></svg></button>
    <button aria-label="list" disabled><svg><use href="#snakep"/></svg></button>
  </div>
  <div class="actions"><button class="btn main">确定</button><button class="btn">应用</button><button class="btn">取消</button></div>
</section>
<svg class="cursor" viewBox="0 0 10 16" aria-hidden="true"><path d="M1 1v11l3-2 2 5 2-1-2-5h3z"/></svg>
</body>
</html>
```
FILE: styles.css
```css
* { box-sizing: border-box; }
body {
  margin: 0;
  overflow: hidden;
  background: #ebe9ee;
  font: 10px/14px "Liberation Sans", "Noto Sans CJK SC", sans-serif;
  color: #111;
}
button, select, input { font: inherit; color: inherit; margin: 0; padding: 0; }
svg { fill: none; stroke: currentColor; stroke-width: 1.2; width: 20px; height: 20px; flex: none; }
.sprite { position: absolute; width: 0; height: 0; }
h2, h3, p { margin: 0; font-weight: normal; }

.app { display: flex; flex-direction: column; min-height: 100vh; }
.titlebar {
  height: 25px;
  padding: 3px 3px 0;
  overflow: hidden;
  white-space: pre;
  color: #fff;
  font: bold 11px/22px "Liberation Mono", "Noto Sans CJK SC", monospace;
  background: linear-gradient(#7da4dc 0, #3560ac 2px, #4a80c8 5px, #5490dc 50%, #8ebcee 92%, #a8c8e8);
}
.menubar {
  display: flex;
  gap: 9px;
  height: 17px;
  margin-left: -5px;
  overflow: hidden;
  white-space: nowrap;
  background: #e6ecf3;
}
.menubar a { height: 12px; margin-top: 2px; line-height: 12px; background: #f7f7f5; color: #9a9a9e; text-decoration: none; }
.menubar i { font: 9px/12px "Liberation Mono", monospace; text-decoration: underline; }

.toolbar {
  display: flex;
  align-items: center;
  height: 29px;
  overflow: hidden;
  color: #a6a5ab;
  background: #ebe9ee;
  border-top: 1px solid #c4c4ca;
  box-shadow: inset 0 1px #fafafc;
}
.menubar + .toolbar, .low { height: 28px; }
.toolbar button {
  display: grid;
  place-items: center;
  flex: none;
  width: 27px;
  height: 26px;
  border: 0;
  background: none;
}
.lead > button:first-child { margin-left: -13px; }
.low > button:first-child { margin-left: -7px; }
.low button:nth-child(3n) { width: 26px; }
.toolbar .on { border: 1px solid #aaa; border-radius: 3px; background: #fff; }
.toolbar hr { flex: none; width: 2px; height: 22px; margin: 0 2px; border: 0; border-left: 1px solid #aaaab2; background: #fff; }
.grip {
  flex: none;
  width: 9px;
  height: 28px;
  border-left: 1px solid #a0a0a8;
  background: radial-gradient(circle at 1px 1px, #9a9aa4 1px, transparent 1px) 4px 4px / 4px 4px repeat-y;
}
.low .grip { width: 7px; margin-left: -4px; }
.drop { flex: none; width: 8px; height: 5px; background: #222; clip-path: polygon(0 0, 6px 0, 3px 4px); }
.end { height: 28px; border-left: 1px solid #888; }

.work { flex: 1; display: flex; min-height: 0; border: solid #8c4a52; border-width: 1px 0; }
.scene {
  flex: 1;
  width: auto;
  height: auto;
  min-width: 0;
  stroke: none;
  background: linear-gradient(#25244d, #1c3866 35%, #15517d 68%, #0c6799);
}
.side { flex: none; width: 226px; border-left: 4px solid #dcdce2; background: linear-gradient(90deg, #aaa 1px, #f0eff4 1px); }
.axis { fill: #b8481c; font: 9px "DejaVu Sans", sans-serif; }
.mark { fill: #40505a; fill-opacity: .35; font: bold 17px "DejaVu Sans", sans-serif; }

.combo { display: grid; align-items: center; height: 17px; border: 1px solid #8e9db4; background: #fff; }
.combo > * { grid-area: 1 / 1; }
.combo select { width: 100%; height: 100%; padding: 0 3px; border: 0; background: none; appearance: none; opacity: 1; }
.arrow { justify-self: end; pointer-events: none; width: 14px; height: 100%; padding: 2px; border: 1px solid #9cb0d0; background: linear-gradient(#e2ebf8, #a9bfdc); color: #3a4a66; }
.off { background: #e9e8ec; border-color: #b4b4bc; color: #909096; }
.off .arrow { background: #d9e5f3; border-color: #dbe6f2; color: #9fb4cc; }
.wide { flex: none; width: 105px; margin: 0 2px 0 11px; }
.any { flex: none; width: 90px; margin-left: 6px; font-family: "Liberation Mono", "Noto Sans CJK SC", monospace; font-size: 12px; }
.gap .combo { height: 19px; }
.gap hr + hr { margin-right: 4px; }
.status { display: flex; height: 15px; background: #eff3f8; border-top: 2px solid #cdd3da; }
.status span { flex: 1; }
.status span:first-child { flex: 0 0 384px; }
.status span:last-child { flex: 0 0 21px; }
.status span + span { border-left: 1px solid #cdd3da; }

.win { position: absolute; background: #ebe9ee; }
.win h2 { display: flex; align-items: center; gap: 4px; color: #fff; font-weight: bold; }
.win h2 svg { width: 14px; height: 14px; }
fieldset { margin: 0; padding: 0; border: 1px solid #d0cfd4; border-radius: 4px; min-width: 0; }
legend { color: #2c5aa8; padding: 0 3px; }

.create { left: 437px; top: 134px; width: 220px; height: 277px; border: 3px solid #6ea4e4; border-top: 0; border-radius: 6px 6px 0 0; }
.create h2 { height: 25px; margin: 0 -3px; padding: 0 4px; font-size: 11px; border-radius: 6px 6px 0 0; background: linear-gradient(#4f88d6, #82b2ec 20%, #5c94dc 60%, #86b6ee); }
.form { padding: 4px 4px 0; }
.form p { line-height: 14px; margin-bottom: 5px; }
.form p:first-child { margin-bottom: 2px; }
.form fieldset { display: flex; flex-direction: column; gap: 8px; height: 101px; margin: 0 0 5px 13px; padding: 3px 7px 0; }
.form fieldset legend { margin-left: -2px; }
.engrave { display: flex; }
.engrave b { font: bold 14px/14px "Liberation Serif", serif; color: #1c1cc8; margin-left: -10px; }
.form hr { margin: 7px 0 0; border: 0; border-top: 1px solid #aaa; }

.mill { left: 492px; top: 14px; width: 215px; height: 537px; border: 3px solid #3f6fc8; border-top: 0; border-radius: 7px 7px 0 0; }
.mill h2 {
  height: 25px;
  margin: 0 -3px;
  padding: 1px 4px 0;
  border-radius: 7px 7px 0 0;
  border: 1px solid #2a56b0;
  font: bold 11px "Liberation Mono", monospace;
  background: linear-gradient(#6fa4ea, #4a86dc 20%, #2f6acc 60%, #2450ae);
}
.mill .close { display: grid; place-items: center; margin-left: auto; margin-right: -1px; width: 17px; height: 17px; border: 1px solid #fff; border-radius: 3px; background: linear-gradient(#f0987c, #cc4228); }
.close svg { stroke: #fff; stroke-width: 2; }
.tabs { display: flex; align-items: end; height: 17px; padding: 0 5px; }
.tabs button { width: 39px; height: 13px; padding-left: 3px; text-align: left; line-height: 11px; border: 1px solid #98a8c4; border-bottom: 0; border-radius: 2px 2px 0 0; background: linear-gradient(#fff, #b4c8e0); }
.tabs .cur { width: 41px; height: 15px; border-top: 2px solid #f0a030; background: #fbfbfe; }
.page { height: 423px; margin: 0 5px; padding: 1px 5px 0; border: 1px solid #96a4ba; border-right-width: 2px; border-bottom-width: 2px; background: linear-gradient(#fcfcfe, #f6f9fd); }
.page h3 { font-size: 10px; line-height: 15px; text-align: center; }
.page hr { margin: 4px 0 3px; border: 0; border-top: 1px solid #a8a8ae; }
.icons { display: flex; justify-content: space-around; align-items: center; height: 32px; border: 1px solid #d4d3d8; border-radius: 4px; }
.icons button, .path button { display: grid; place-items: center; width: 27px; height: 27px; padding: 0; border: 0; background: none; }
.icons .on { border: 1px solid #a8a8ac; border-radius: 3px; background: #fdfdfd; }
.icons button:disabled { color: #a6a5ab; }
.five { margin: 4px 18px; padding: 0 2px; }
.row { display: grid; grid-template-columns: 1fr 1fr; gap: 3px; margin-bottom: 3px; padding-right: 1px; }
.three { grid-template-columns: 1fr 1fr 1fr; margin-bottom: 4px; }
.btn { height: 19px; border: 1px solid #446290; border-radius: 2px; background: linear-gradient(#fdfeff, #e4ecf6 50%, #a4b8d4); box-shadow: inset 0 0 0 1px #8ca6cc88; line-height: 15px; }
.btn:disabled { color: #a8a8ac; background: #fbfbfd; border-color: #cacace; box-shadow: none; }
.full { display: block; width: 100%; }
.btn.hot { border-color: #6a6a80; box-shadow: inset 0 0 0 1px #efb765; }
.tick { display: flex; align-items: center; gap: 4px; height: 15px; }
.tick input { appearance: none; width: 11px; height: 11px; border: 1px solid #456a94; background: #eef2f6; }
.page .tick + hr { margin: 0 0 4px; }
.field { display: flex; align-items: center; justify-content: space-between; height: 19px; }
.field.tall { height: 31px; align-items: start; line-height: 28px; }
.dim { color: #a0a0a6; }
.pattern { display: flex; justify-content: space-between; align-items: center; width: 42px; height: 28px; border: 1px solid #9aa6b6; background: #fff; }
.pattern .pic { width: 22px; margin-left: 3px; }
.step { width: 82px; }
.angle { width: 72px; }
.num { width: 45px; height: 16px; padding: 2px; border: 1px solid #8e9db4; background: #fff; }
.num input { display: block; width: 100%; height: 10px; border: 0; outline: 0; background: none; text-align: right; font: 9px/10px "Liberation Mono", monospace; }
.num .sel { background: #2c58a8; color: #fff; }
.dim .num { background: #e9e8ec; border-color: #b4b4bc; }
.row.pair { margin-bottom: 5px; }
.page fieldset { display: flex; gap: 2px; justify-content: center; width: 62px; height: 44px; margin: 0 auto; }
.path legend { margin-left: 3px; line-height: 14px; }
.four { width: 120px; margin: 6px auto 5px; }
.actions { display: flex; justify-content: flex-end; gap: 5px; padding: 4px 8px; border-top: 1px solid #aaa; }
.actions .btn { width: 44px; }
.actions .main { box-shadow: inset 0 0 0 2px #7c9fe0; }
.cursor { position: absolute; left: 625px; top: 419px; width: 11px; height: 17px; fill: #111; stroke: #fff; stroke-width: .6; }
```
